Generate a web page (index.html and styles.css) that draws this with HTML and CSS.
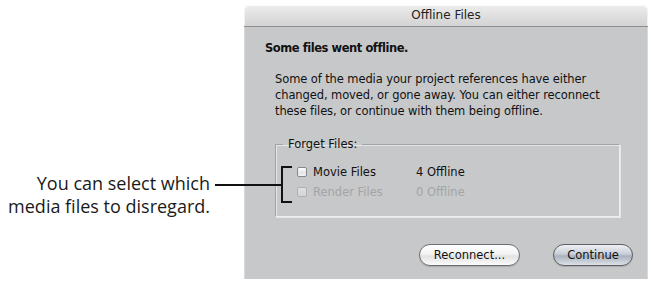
FILE: index.html
```html
<!DOCTYPE html>
<html>
<head>
<meta charset="utf-8">
<link rel="stylesheet" href="styles.css">
</head>
<body>
<div class="page">
  <div class="callout">
    <div class="callout-text">You can select which<br>media files to disregard.</div>
    <div class="callout-line"></div>
    <div class="callout-bracket"></div>
  </div>
  <div class="dialog">
    <div class="titlebar">Offline Files</div>
    <div class="content">
      <div class="headline">Some files went offline.</div>
      <p class="message">Some of the media your project references have either changed, moved, or gone away. You can either reconnect these files, or continue with them being offline.</p>
      <fieldset class="group">
        <legend>Forget Files:</legend>
        <div class="row">
          <span class="check"></span><span class="name">Movie Files</span><span class="count">4 Offline</span>
        </div>
        <div class="row disabled">
          <span class="check"></span><span class="name">Render Files</span><span class="count">0 Offline</span>
        </div>
      </fieldset>
      <div class="buttons">
        <button class="btn">Reconnect...</button>
        <button class="btn default">Continue</button>
      </div>
    </div>
  </div>
</div>
</body>
</html>
```
FILE: styles.css
```css
html, body { margin: 0; padding: 0; background: #fff; }
.page { position: relative; width: 651px; height: 284px; overflow: hidden; }
.callout-text {
  position: absolute; right: 441px; top: 172px;
  font-family: "Open Sans", sans-serif; font-size: 18px; line-height: 23px;
  color: #1a1a1a; text-align: right; white-space: nowrap;
}
.callout-line { position: absolute; left: 215px; top: 184px; width: 67px; height: 1.5px; background: #111; }
.callout-bracket {
  position: absolute; left: 281px; top: 166px; width: 11px; height: 37px;
  border: 2px solid #111; border-right: none; box-sizing: border-box;
}
.dialog {
  margin-left: 244px; margin-top: 5px; width: 404px; height: 274px;
  background: #c7c8ca; box-sizing: border-box;
  font-family: "DejaVu Sans", sans-serif; color: #111;
  border-radius: 6px 6px 0 0;
  box-shadow: inset 1px 0 0 #d8d9db, inset -1px 0 0 #d8d9db;
}
.titlebar {
  height: 21px; line-height: 21px; text-align: center; font-size: 12px;
  color: #222;
  background: linear-gradient(#ededed, #d3d3d3);
  border-radius: 6px 6px 0 0;
  border-bottom: 1px solid #8e8e8e;
  box-shadow: inset 0 1px 0 #fbfbfb, inset 1px 0 0 #f2f2f2, inset -1px 0 0 #f2f2f2;
}
.content { padding: 13px 0 0 21px; }
.headline { font-weight: bold; font-size: 11.5px; letter-spacing: -0.45px; line-height: 16px; }
.message {
  margin: 16px 0 0 10px; width: 345px; font-size: 11.5px; letter-spacing: -0.1px;
  line-height: 15.75px;
}
.group {
  margin: 18px 0 0 10px; padding: 11px 0 0 21px; width: 345px; height: 80px;
  box-sizing: border-box; min-width: 0;
  border: 1px solid #a2a3a5; border-right-color: #eeeeef; border-bottom-color: #eeeeef;
  box-shadow: 1px 1px 0 #e6e6e7, inset 1px 1px 0 #e6e6e7;
}
.group legend { font-size: 11.5px; line-height: 14px; padding: 0 5px; margin-left: -14px; }
.row { display: flex; align-items: center; height: 20px; font-size: 11.5px; }
.check {
  width: 10px; height: 10px; margin-right: 6px; box-sizing: border-box;
  border: 1px solid #8a8a8a; border-radius: 2px;
  background: linear-gradient(#ffffff, #e4e4e4 60%, #f4f4f4);
}
.name { width: 103px; }
.disabled { color: #a3a4a6; }
.disabled .check { border-color: #b0b1b3; background: linear-gradient(#e0e0e1, #d4d4d5); }
.buttons { display: flex; justify-content: flex-end; margin: 27px 15px 0 0; }
.btn {
  height: 22px; border-radius: 11px; font-family: "DejaVu Sans", sans-serif;
  font-size: 11.5px; color: #111; border: 1px solid #6f6f6f;
  background: linear-gradient(#ffffff 0%, #f3f3f3 45%, #e2e2e2 55%, #fbfbfb 100%);
  padding: 0; width: 101px; box-shadow: 0 1px 1px rgba(0,0,0,0.15);
}
.btn.default {
  width: 80px; margin-left: 33px;
  background: linear-gradient(#eef0f3 0%, #c9cfd8 45%, #aab2be 55%, #dde1e7 100%);
  border-color: #5d5f63;
}
```
